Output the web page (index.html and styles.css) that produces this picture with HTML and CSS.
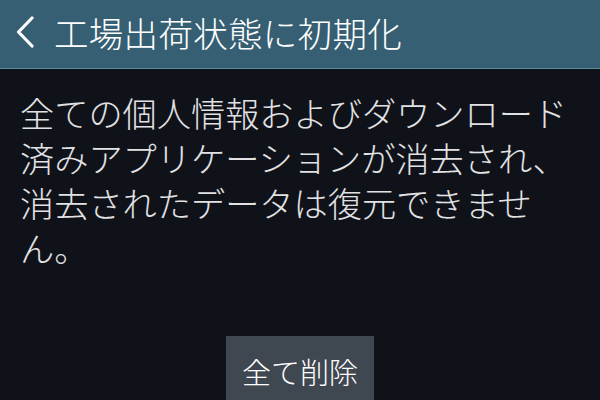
FILE: index.html
```html
<!DOCTYPE html>
<html lang="ja">
<head>
<meta charset="utf-8">
<link rel="stylesheet" href="styles.css">
</head>
<body>
<div class="screen">
  <header class="bar">
    <svg class="back" width="18" height="32" viewBox="0 0 18 32"><path d="M16 2 L2.5 16 L16 30" fill="none" stroke="#ffffff" stroke-width="3.2" stroke-linecap="round" stroke-linejoin="round"/></svg>
    <h1 class="title">工場出荷状態に初期化</h1>
  </header>
  <main class="content">
    <p class="message">全ての個人情報およびダウンロード済みアプリケーションが消去され、消去されたデータは復元できません。</p>
    <div class="actions">
      <button class="btn">全て削除</button>
    </div>
  </main>
</div>
</body>
</html>
```

FILE: styles.css
```css
html, body {
  margin: 0;
  padding: 0;
  background: #10121a;
}
.screen {
  width: 600px;
  height: 400px;
  overflow: hidden;
  display: flex;
  flex-direction: column;
  font-family: "Noto Sans CJK JP", "Noto Sans", sans-serif;
  background: #10121a;
}
.bar {
  height: 69px;
  background: #365f73;
  border-bottom: 1px solid #5b8a96;
  display: flex;
  align-items: center;
  padding: 0 0 4px 16px;
  gap: 20px;
  box-sizing: border-box;
  flex: none;
}
.back {
  display: block;
  flex: none;
}
.title {
  margin: 0;
  font-size: 34.5px;
  font-weight: 300;
  color: #ffffff;
  line-height: 1;
  letter-spacing: 0.3px;
}
.content {
  flex: 1;
  display: flex;
  flex-direction: column;
  padding: 21px 0 0 20px;
}
.message {
  margin: 0;
  width: 560px;
  font-size: 34.2px;
  font-weight: 300;
  line-height: 45px;
  color: #e2e2e4;
  line-break: strict;
}
.actions {
  display: flex;
  justify-content: center;
  padding-right: 20px;
  margin-top: 66px;
}
.btn {
  width: 148px;
  height: 80px;
  border: none;
  background: #3f4751;
  color: #ffffff;
  font-family: "Noto Sans CJK JP", sans-serif;
  font-size: 29px;
  font-weight: 300;
  padding: 18px 0 0 0;
  display: flex;
  justify-content: center;
  align-items: flex-start;
  line-height: 1.2;
}
```
